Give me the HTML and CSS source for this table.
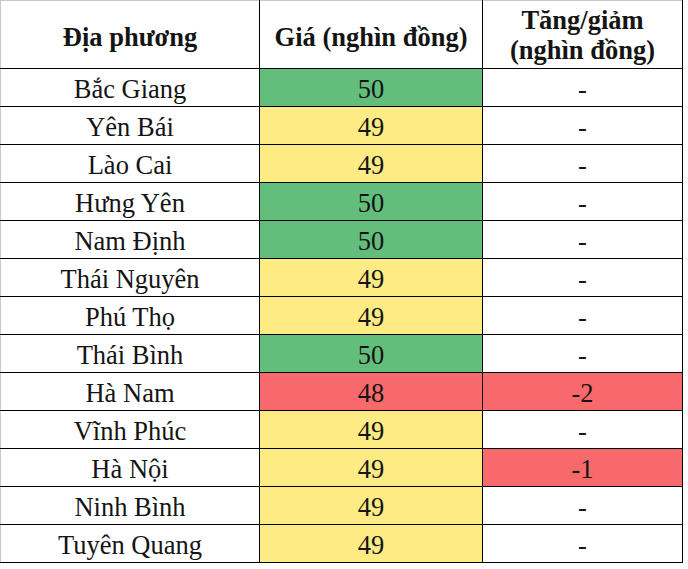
FILE: index.html
```html
<!DOCTYPE html>
<html lang="vi">
<head>
<meta charset="utf-8">
<title>Giá</title>
<link rel="stylesheet" href="styles.css">
</head>
<body>
<table class="price-table">
  <colgroup>
    <col class="c1">
    <col class="c2">
    <col class="c3">
  </colgroup>
  <thead>
    <tr>
      <th class="h-single">Địa phương</th>
      <th class="h-single">Giá (nghìn đồng)</th>
      <th class="h-double">Tăng/giảm<br>(nghìn đồng)</th>
    </tr>
  </thead>
  <tbody>
    <tr><td>Bắc Giang</td><td class="green">50</td><td>-</td></tr>
    <tr><td>Yên Bái</td><td class="yellow">49</td><td>-</td></tr>
    <tr><td>Lào Cai</td><td class="yellow">49</td><td>-</td></tr>
    <tr><td>Hưng Yên</td><td class="green">50</td><td>-</td></tr>
    <tr><td>Nam Định</td><td class="green">50</td><td>-</td></tr>
    <tr><td>Thái Nguyên</td><td class="yellow">49</td><td>-</td></tr>
    <tr><td>Phú Thọ</td><td class="yellow">49</td><td>-</td></tr>
    <tr><td>Thái Bình</td><td class="green">50</td><td>-</td></tr>
    <tr><td>Hà Nam</td><td class="red">48</td><td class="red">-2</td></tr>
    <tr><td>Vĩnh Phúc</td><td class="yellow">49</td><td>-</td></tr>
    <tr><td>Hà Nội</td><td class="yellow">49</td><td class="red">-1</td></tr>
    <tr><td>Ninh Bình</td><td class="yellow">49</td><td>-</td></tr>
    <tr><td>Tuyên Quang</td><td class="yellow">49</td><td>-</td></tr>
  </tbody>
</table>
</body>
</html>
```

FILE: styles.css
```css
html, body {
  margin: 0;
  padding: 0;
  background: #ffffff;
}

body {
  font-family: "Liberation Serif", "Times New Roman", serif;
  color: #141414;
}

.price-table {
  border-collapse: collapse;
  table-layout: fixed;
  width: 682px;
  border-top: 1px solid #c8c8c8;
  border-left: 1px solid #c8c8c8;
}

.c1 { width: 259px; }
.c2 { width: 223px; }
.c3 { width: 200px; }

.price-table th,
.price-table td {
  border: 1px solid #000000;
  padding: 0;
  text-align: center;
  vertical-align: middle;
  font-size: 26.5px;
  line-height: 30px;
}

.price-table tr:first-child th {
  border-top-color: #c8c8c8;
}

.price-table th:first-child,
.price-table td:first-child {
  border-left-color: #c8c8c8;
}

.price-table th {
  font-weight: bold;
  height: 68px;
  box-sizing: border-box;
}

.price-table th.h-single {
  padding-top: 4px;
}

.price-table th.h-double {
  padding-top: 0;
}

.price-table td {
  height: 38px;
  box-sizing: border-box;
  font-weight: normal;
  padding-top: 2px;
}

.green { background: #63be7b; }
.yellow { background: #ffeb84; }
.red { background: #f8696b; }
```
